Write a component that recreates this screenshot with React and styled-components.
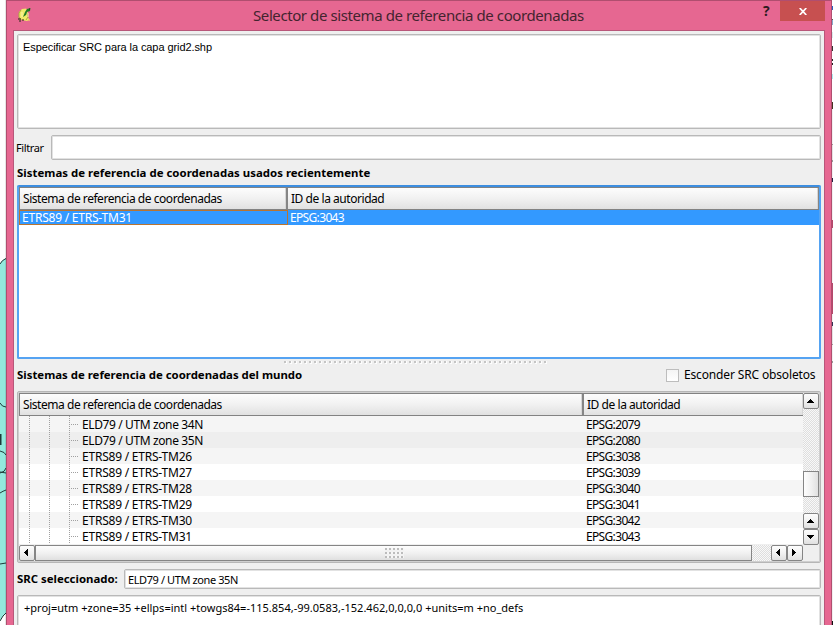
import React from 'react';
import styled, { createGlobalStyle, css } from 'styled-components';

const UI = '"Noto Sans", "Open Sans", sans-serif';

const Global = createGlobalStyle`
  * { box-sizing: border-box; }
  body { margin: 0; overflow: hidden; background: #fff; }
`;

const Desktop = styled.div`
  display: flex;
  width: 833px;
  height: 625px;
  overflow: hidden;
  background: #fff;
  color: #000;
  font: 12px/16px ${UI};
  white-space: nowrap;
`;

const MapEdge = styled.svg`
  flex: none;
  width: 6px;
  height: 625px;
`;

const AppEdge = styled.div`
  flex: none;
  width: 1px;
  background: linear-gradient(
    #fff 6px, #2b60c0 6px 10px, #fff 10px 19px, #555 19px 20px, #8ac 20px 25px, #fff 25px 32px,
    #d8ecec 32px 38px, #fff 38px 46px, #333 46px 51px, #fff 51px 59px, #222 59px 61px, #fff 61px 63px, #222 63px 65px,
    #fff 65px 74px, #a8eef0 74px 79px, #fff 79px 102px, #432 102px 109px, #f0f0f0 109px 144px, #999 144px 145px,
    #e4e4e4 145px 160px, #999 160px 162px, #f0f0f0 162px 178px, #224 178px 182px, #f0f0f0 182px 220px,
    #b5486c 220px 228px, #f0f0f0 228px 283px, #b5486c 283px 314px, #f0f0f0 314px 322px, #335 322px 326px,
    #e4e4e4 326px 344px, #999 344px 345px, #f0f0f0 345px 361px, #999 361px 363px, #f0f0f0 363px 621px, #111 621px
  );
`;

const Window = styled.div`
  display: flex;
  flex-direction: column;
  width: 826px;
  height: 640px;
  border: 1px solid #b04e6f;
  background: #e66791;
`;

const TitleBar = styled.header`
  display: flex;
  align-items: flex-start;
  flex: none;
  height: 29px;
  padding: 0 6px 0 11px;
`;

const AppIcon = styled.svg`
  flex: none;
  width: 14px;
  height: 16px;
  margin-top: 6px;
`;

const Title = styled.h1`
  flex: 1;
  margin: 0 0 0 221px;
  font-size: 15px;
  font-weight: 400;
  line-height: 29px;
  letter-spacing: -0.41px;
  color: #43242f;
`;

const HelpMark = styled.span`
  width: 8px;
  margin: 0 9px 0 0;
  font: 700 14px/20px "Open Sans", sans-serif;
  color: #2c1a20;
`;

const CloseButton = styled.button`
  display: flex;
  align-items: center;
  justify-content: center;
  width: 45px;
  height: 20px;
  padding: 0;
  border: 0;
  background: #c75050;
`;

const Client = styled.main`
  display: flex;
  flex-direction: column;
  flex: 1;
  width: 812px;
  margin: 0 6px;
  padding: 3px;
  border: 1px solid #b8577a;
  background: #efefef;
`;

const Field = styled.div`
  flex: ${p => (p.$grow ? 1 : 'none')};
  height: ${p => p.$h}px;
  padding: ${p => p.$pad || '0'};
  border: 1px solid #b9b9b9;
  border-radius: 2px;
  background: #fff;
  box-shadow: inset 0 0 0 1px #e2e2e2;
`;

const Message = styled.span`
  font: 11px/16px "Liberation Sans", sans-serif;
  letter-spacing: -0.08px;
`;

const SmallText = styled.span`
  display: block;
  font-size: 11px;
  line-height: 16px;
  letter-spacing: ${p => p.$ls}px;
`;

const FilterRow = styled.div`
  display: flex;
  align-items: center;
  height: 25px;
  margin-top: 6px;
`;

const FilterLabel = styled(SmallText)`
  width: 35px;
  margin-left: -1px;
`;

const Heading = styled.h2`
  margin: 0;
  font: 700 11.4px/16px ${UI};
  letter-spacing: ${p => p.$ls || 0}px;
`;

const RecentHeading = styled(Heading)`
  height: 25px;
  padding-top: 5px;
`;

const RecentTree = styled.section`
  height: 174px;
  border: 2px solid #55a3f2;
  border-top-color: #3d8ee0;
  border-radius: 2px;
  background: #fff;
`;

const HeaderRow = styled.div`
  display: flex;
  height: 23px;
  border: solid #828282;
  border-width: 1px 0 1px 1px;
  background: linear-gradient(#fdfdfd, #f1f1f1 50%, #e1e1e1);
`;

const HeaderCell = styled.div`
  flex: ${p => (p.$w ? 'none' : 1)};
  width: ${p => (p.$w ? `${p.$w}px` : 'auto')};
  padding-left: 3px;
  border-right: ${p => (p.$w ? 2 : p.$end ? 1 : 0)}px solid #858585;
  line-height: 21px;
  letter-spacing: -0.455px;
  box-shadow: inset -1px 0 0 #d6d6d6;
`;

const SelectedRow = styled.div`
  display: flex;
  height: 15px;
  background: #3399ff;
  color: #fff;
  line-height: 16px;
`;

const FocusCell = styled.div`
  width: 269px;
  padding-left: 2px;
  border: 1px solid #b97430;
  line-height: 14px;
  letter-spacing: -0.22px;
`;

const Code = styled.span`
  padding-left: 2px;
  letter-spacing: -0.66px;
`;

const Splitter = styled.div`
  width: 264px;
  height: 3px;
  margin: 2px 0 0 267px;
  background:
    repeating-linear-gradient(90deg, #c4c4c4 0 2px, transparent 2px 5px) 0 0 / 100% 2px no-repeat,
    repeating-linear-gradient(90deg, #efefef 0 1px, #fdfdfd 1px 3px, #efefef 3px 5px);
`;

const WorldBar = styled.div`
  display: flex;
  align-items: center;
  justify-content: space-between;
  height: 16px;
  margin: 3px 0 8px;
`;

const CheckLabel = styled.label`
  display: flex;
  align-items: center;
  gap: 5px;
  width: 155px;
  letter-spacing: -0.15px;
`;

const CheckBox = styled.span`
  width: 13px;
  height: 13px;
  border: 1px solid #bdbdbd;
  background: linear-gradient(#f4f4f4, #fff);
`;

const WorldTree = styled.section`
  height: 172px;
  padding: 1px;
  border: 1px solid #b6b6b6;
  border-radius: 2px;
  background: #efefef;
  box-shadow: inset 0 0 0 1px #cfcfcf;
`;

const TreeArea = styled.div`
  display: flex;
  height: 152px;
`;

const TreeBody = styled.div`
  width: 784px;
`;

const TreeRow = styled.div`
  display: flex;
  height: 16px;
  line-height: 17px;
  background: ${p => p.$bg};
`;

const Guide = styled.i`
  width: ${p => p.$w}px;
  background: repeating-linear-gradient(#a0a0a0 0 1px, transparent 1px 2px) right / 1px 100% no-repeat;
`;

const Branch = styled.i`
  width: 12px;
  background: repeating-linear-gradient(90deg, transparent 0 1px, #a0a0a0 1px 2px) 0 8px / 9px 1px no-repeat;
`;

const Name = styled.span`
  width: 502px;
  letter-spacing: ${p => (p.$wide ? -0.385 : -0.22)}px;
`;

const dither = css`
  background: repeating-conic-gradient(#dedede 0 25%, #f8f8f8 0 50%) 0 0 / 2px 2px;
`;

const VScroll = styled.div`
  display: flex;
  flex-direction: column;
  width: 16px;
  ${dither}
`;

const HScroll = styled.div`
  display: flex;
  width: 784px;
  height: 16px;
  ${dither}
`;

const raised = css`
  border: 1px solid #858585;
  border-radius: 2px;
  background: linear-gradient(${p => (p.$side ? '90deg' : '180deg')}, #fdfdfd, #f1f1f1 50%, #e0e0e0);
`;

const ScrollButton = styled.button`
  display: flex;
  align-items: center;
  justify-content: center;
  flex: none;
  width: 16px;
  height: 16px;
  padding: 0 ${p => (p.$flat ? 2 : 1)}px 1px 0;
  ${raised}
`;

const VThumb = styled.div`
  height: 26px;
  margin: 62px 0 16px;
  ${raised}
  border-radius: 0;
`;

const HThumb = styled.div`
  display: flex;
  align-items: center;
  justify-content: center;
  width: 717px;
  margin-right: 19px;
  ${raised}
  border-radius: 0;
`;

const Grip = styled.i`
  width: 19px;
  height: 10px;
  margin-left: 2px;
  background:
    repeating-linear-gradient(transparent 0 2px, #f2f2f2 2px 4px),
    repeating-linear-gradient(90deg, #bcbcbc 0 2px, #f6f6f6 2px 4px);
`;

const SelectedBar = styled.div`
  display: flex;
  align-items: center;
  height: 20px;
  margin: 6px 0;
`;

const SelectedLabel = styled(Heading)`
  width: 107px;
`;

const paths = {
  up: 'M3 0h1v1h1v1h1v1h1v1H0V3h1V2h1V1h1z',
  down: 'M0 0h7v1H6v1H5v1H4v1H3V3H2V2H1V1H0z',
  left: 'M4 0v7H3V6H2V5H1V4H0V3h1V2h1V1h1V0z',
  right: 'M0 0h1v1h1v1h1v1h1v1H3v1H2v1H1v1H0z',
};

function Arrow({ dir }) {
  const upright = dir === 'up' || dir === 'down';
  const w = upright ? 7 : 4;
  const h = upright ? 4 : 7;
  return (
    <svg width={w} height={h} viewBox={`0 0 ${w} ${h}`} shapeRendering="crispEdges">
      <path d={paths[dir]} />
    </svg>
  );
}

const rows = [
  ['ELD79 / UTM zone 34N', 'EPSG:2079', '#f5f5f5'],
  ['ELD79 / UTM zone 35N', 'EPSG:2080', '#eeeeee'],
  ['ETRS89 / ETRS-TM26', 'EPSG:3038', '#f5f5f5'],
  ['ETRS89 / ETRS-TM27', 'EPSG:3039', '#ffffff'],
  ['ETRS89 / ETRS-TM28', 'EPSG:3040', '#f5f5f5'],
  ['ETRS89 / ETRS-TM29', 'EPSG:3041', '#ffffff'],
  ['ETRS89 / ETRS-TM30', 'EPSG:3042', '#f5f5f5'],
  ['ETRS89 / ETRS-TM31', 'EPSG:3043', '#ffffff'],
];

export default function App() {
  return (
    <>
      <Global />
      <Desktop>
        <MapEdge viewBox="0 0 6 625">
          <path d="M0 264 Q2 260 6 258 V613 Q3 614 0 621z" fill="#93e9dd" />
          <g fill="none" stroke="#1d3b38">
            <path d="M0 264 Q2 260 6 258.5M0 403Q2 407 6 407M0 451Q5 452 6 455M0 473Q5 472 6 468M0 472L6 473M0 493Q3 491 6 490M0 564L6 563M0 621Q3 615 6 613" />
            <path d="M.5 434v11" strokeWidth="2" />
          </g>
          <path d="M5 0h1v625H5z" fill="#000" opacity=".1" />
        </MapEdge>
        <Window>
          <TitleBar>
            <AppIcon viewBox="0 0 14 16">
              <path d="M4 2L8 1.5 10 4 9 9 11 12 9 14 4 13 1 10 1 5z" fill="#f0ea68" />
              <path d="M3 3L1 6v4l2 3M9 6l1 4-2 3" fill="none" stroke="#a9ad3c" />
              <path d="M12.5 1L9 2 7 5 5 10 8 8 9 5 12 4z" fill="#207c24" />
              <path d="M4 5v5M10 6v4" stroke="#f8f6b0" />
              <path d="M0 12h3M2 13v2M11 2h1M4 13h2" stroke="#252a10" />
              <path d="M9 13h3" stroke="#f4ea58" />
            </AppIcon>
            <Title>Selector de sistema de referencia de coordenadas</Title>
            <HelpMark>?</HelpMark>
            <CloseButton aria-label="Cerrar">
              <svg width="8" height="7" viewBox="0 0 8 7">
                <path d="M.7 0L7.3 7M7.3 0L.7 7" stroke="#fff" strokeWidth="1.7" />
              </svg>
            </CloseButton>
          </TitleBar>
          <Client>
            <Field $h={95} $pad="4px 5px">
              <Message>Especificar SRC para la capa grid2.shp</Message>
            </Field>
            <FilterRow>
              <FilterLabel $ls={-0.4}>Filtrar</FilterLabel>
              <Field $grow $h={25} />
            </FilterRow>
            <RecentHeading $ls={0.03}>Sistemas de referencia de coordenadas usados recientemente</RecentHeading>
            <RecentTree>
              <HeaderRow>
                <HeaderCell $w={268}>Sistema de referencia de coordenadas</HeaderCell>
                <HeaderCell $end>ID de la autoridad</HeaderCell>
              </HeaderRow>
              <SelectedRow>
                <FocusCell>ETRS89 / ETRS-TM31</FocusCell>
                <Code>EPSG:3043</Code>
              </SelectedRow>
            </RecentTree>
            <Splitter />
            <WorldBar>
              <Heading>Sistemas de referencia de coordenadas del mundo</Heading>
              <CheckLabel>
                <CheckBox />
                Esconder SRC obsoletos
              </CheckLabel>
            </WorldBar>
            <WorldTree>
              <TreeArea>
                <TreeBody>
                  <HeaderRow>
                    <HeaderCell $w={564}>Sistema de referencia de coordenadas</HeaderCell>
                    <HeaderCell>ID de la autoridad</HeaderCell>
                  </HeaderRow>
                  {rows.map(([name, code, bg]) => (
                    <TreeRow key={code} $bg={bg}>
                      <Guide $w={11} />
                      <Guide $w={20} />
                      <Guide $w={20} />
                      <Branch />
                      <Name $wide={name.startsWith('ELD')}>{name}</Name>
                      <Code>{code}</Code>
                    </TreeRow>
                  ))}
                </TreeBody>
                <VScroll>
                  <ScrollButton><Arrow dir="up" /></ScrollButton>
                  <VThumb $side />
                  <ScrollButton><Arrow dir="up" /></ScrollButton>
                  <ScrollButton><Arrow dir="down" /></ScrollButton>
                </VScroll>
              </TreeArea>
              <HScroll>
                <ScrollButton $flat><Arrow dir="left" /></ScrollButton>
                <HThumb><Grip /></HThumb>
                <ScrollButton $flat><Arrow dir="left" /></ScrollButton>
                <ScrollButton $flat><Arrow dir="right" /></ScrollButton>
              </HScroll>
            </WorldTree>
            <SelectedBar>
              <SelectedLabel>SRC seleccionado:</SelectedLabel>
              <Field $grow $h={20} $pad="2px 3px">
                <SmallText $ls={-0.4}>ELD79 / UTM zone 35N</SmallText>
              </Field>
            </SelectedBar>
            <Field $h={95} $pad="4px 6px">
              <SmallText $ls={0.01}>
                +proj=utm +zone=35 +ellps=intl +towgs84=-115.854,-99.0583,-152.462,0,0,0,0 +units=m +no_defs
              </SmallText>
            </Field>
          </Client>
        </Window>
        <AppEdge />
      </Desktop>
    </>
  );
}
